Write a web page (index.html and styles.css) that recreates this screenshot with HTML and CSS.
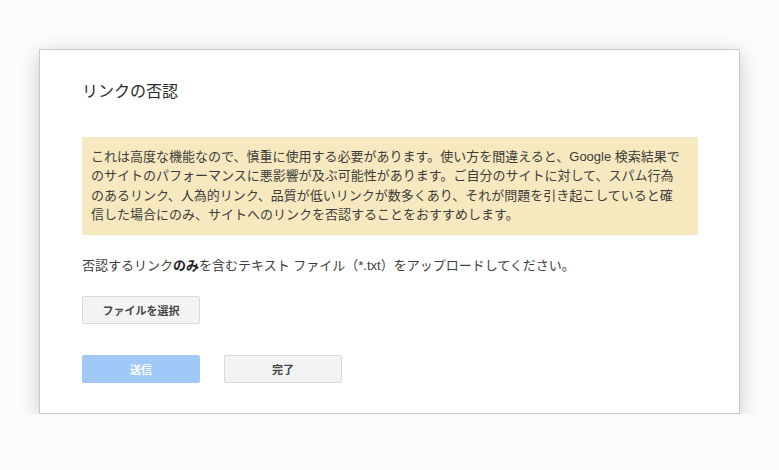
FILE: index.html
```html
<!DOCTYPE html>
<html lang="ja">
<head>
<meta charset="utf-8">
<title>リンクの否認</title>
<link rel="stylesheet" href="styles.css">
</head>
<body>
<div class="dialog">
  <h1 class="title">リンクの否認</h1>
  <div class="warning">これは高度な機能なので、慎重に使用する必要があります。使い方を間違えると、Google 検索結果で<br>のサイトのパフォーマンスに悪影響が及ぶ可能性があります。ご自分のサイトに対して、スパム行為<br>のあるリンク、人為的リンク、品質が低いリンクが数多くあり、それが問題を引き起こしていると確<br>信した場合にのみ、サイトへのリンクを否認することをおすすめします。</div>
  <p class="instruction">否認するリンク<b>のみ</b>を含むテキスト ファイル（*.txt）をアップロードしてください。</p>
  <div class="file-row">
    <button class="btn">ファイルを選択</button>
  </div>
  <div class="actions">
    <button class="btn btn-primary" disabled>送信</button>
    <button class="btn">完了</button>
  </div>
</div>
</body>
</html>
```
FILE: styles.css
```css
html, body {
  margin: 0;
  padding: 0;
  background: #fcfcfc;
}
body {
  font-family: "Liberation Sans", "Noto Sans CJK JP", sans-serif;
  color: #3c3c3c;
  padding-top: 49px;
  padding-left: 39px;
}
.dialog {
  box-sizing: border-box;
  width: 701px;
  height: 365px;
  background: #fff;
  border: 1px solid #c8c8c8;
  box-shadow: 0 5px 20px rgba(0, 0, 0, 0.2);
  padding: 32px 42px 30px 42px;
}
.title {
  margin: 0 0 35px 0;
  font-size: 16px;
  line-height: 20px;
  font-weight: normal;
  color: #2a2a2a;
}
.warning {
  box-sizing: border-box;
  width: 616px;
  background: #f7e9bf;
  padding: 10px 9px;
  font-size: 13px;
  line-height: 19.4px;
  color: #3c3c3c;
  white-space: nowrap;
}
.instruction {
  margin: 21px 0 0 0;
  font-size: 13px;
  line-height: 19px;
  color: #3c3c3c;
}
.instruction b {
  font-weight: bold;
  color: #222;
}
.file-row {
  margin-top: 21px;
}
.btn {
  box-sizing: border-box;
  width: 118px;
  height: 28px;
  padding: 0;
  font-family: "Liberation Sans", "Noto Sans CJK JP", sans-serif;
  font-size: 11px;
  font-weight: bold;
  color: #444;
  background: #f3f3f3;
  border: 1px solid #d9d9d9;
  border-radius: 2px;
}
.actions {
  margin-top: 31px;
  display: flex;
  gap: 24px;
}
.btn-primary {
  background: #a1c9f8;
  border-color: #a1c9f8;
  color: #fff;
}
```
